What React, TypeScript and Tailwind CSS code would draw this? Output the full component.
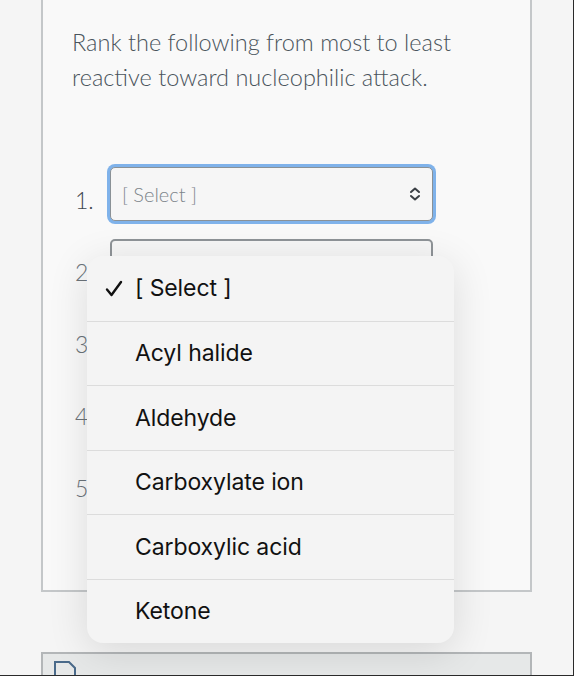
import React from 'react';

const options = ['[ Select ]', 'Acyl halide', 'Aldehyde', 'Carboxylate ion', 'Carboxylic acid', 'Ketone'];

const Chevrons: React.FC = () => (
  <svg width="12" height="14" viewBox="0 0 12 14" fill="none" stroke="#3a3f44" strokeWidth="2" strokeLinecap="round" strokeLinejoin="round">
    <polyline points="2,5 6,1.5 10,5" />
    <polyline points="2,9 6,12.5 10,9" />
  </svg>
);

const Check: React.FC = () => (
  <svg width="18" height="17" viewBox="0 0 18 17" fill="none" stroke="#111" strokeWidth="2.4" strokeLinecap="round" strokeLinejoin="round">
    <polyline points="2,9.5 6.5,15 16,2" />
  </svg>
);

export default function App() {
  const rows = [1, 2, 3, 4, 5];
  return (
    <div className="relative w-[574px] h-[676px] overflow-hidden bg-[#f5f5f5] border-r border-b border-[#2a2a2a]" style={{ fontFamily: 'Lato, "Noto Sans", sans-serif' }}>
      <div className="ml-[41px] w-[491px] h-[592px] bg-[#f9f9f9] border-x-2 border-b-2 border-[#c4c7c9] pl-[29px] pt-[25px]">
        <p className="text-[23.5px] leading-[35px] text-[#4a545c] font-light w-[420px]">
          Rank the following from most to least reactive toward nucleophilic attack.
        </p>
        <div className="mt-[72px] flex flex-col gap-[18px]">
          {rows.map((n) => (
            <div key={n} className="flex items-center">
              <span className={`w-[38px] pl-[3px] text-[23px] font-light pt-[12px] ${n === 1 ? 'text-[#3c464e]' : 'text-[#6b7379]'}`}>{n}.</span>
              <div
                className={`w-[323px] h-[54px] rounded-[5px] bg-[#f6f6f6] flex items-center justify-between pl-[11px] pr-[11px] ${
                  n === 1 ? 'border border-[#8a9196] ring-[3px] ring-[#7fb2ea]' : 'border-2 border-[#8e9397]'
                }`}
              >
                <span className="text-[20px] font-light text-[#7d858b]">{n === 1 ? '[ Select ]' : ''}</span>
                {n === 1 && <Chevrons />}
              </div>
            </div>
          ))}
        </div>
      </div>

      <div className="mt-[60px] ml-[41px] w-[491px] h-[40px] bg-[#e6e8e8] border-x-2 border-t-2 border-[#b3b6b8] pl-[11px] pt-[7px]">
        <svg width="26" height="20" viewBox="0 0 26 20" fill="none" stroke="#4a6a8a" strokeWidth="2">
          <path d="M1 20 V1 H15 L21 7 V20" />
        </svg>
      </div>

      <div
        className="absolute left-[87px] top-[256px] w-[367px] rounded-[16px] bg-[#f4f4f4] shadow-[0_8px_40px_rgba(0,0,0,0.12)] overflow-hidden"
        style={{ fontFamily: 'Inter, "Liberation Sans", sans-serif' }}
      >
        {options.map((o, i) => (
          <div key={o} className={`h-[64.5px] flex items-center ${i > 0 ? 'border-t border-[#dcdcdc]' : ''}`}>
            <span className="w-[48px] flex justify-end pr-[12px]">{i === 0 && <Check />}</span>
            <span className="text-[23px] text-[#111] tracking-[-0.1px]">{o}</span>
          </div>
        ))}
      </div>
    </div>
  );
}
